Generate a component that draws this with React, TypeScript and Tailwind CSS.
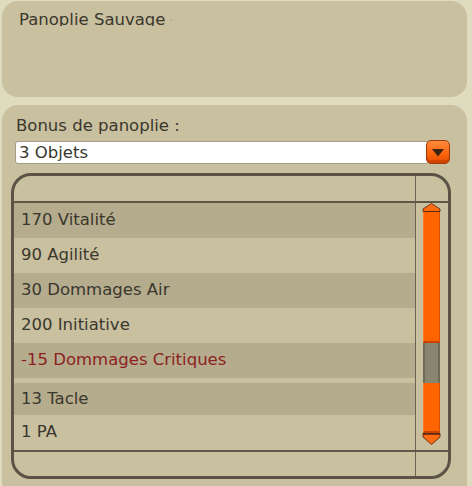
import React from "react";

type Row = { t: string; cls: string; red?: boolean };

const rows: Row[] = [
  { t: "170 Vitalité", cls: "h-[35px] bg-[#b5ac8d]" },
  { t: "90 Agilité", cls: "h-[35px]" },
  { t: "30 Dommages Air", cls: "h-[35px] bg-[#b5ac8d]" },
  { t: "200 Initiative", cls: "h-[35px]" },
  { t: "-15 Dommages Critiques", cls: "h-[35px] bg-[#b5ac8d]", red: true },
  { t: "", cls: "h-[5px]" },
  { t: "13 Tacle", cls: "h-[32px] bg-[#b5ac8d]" },
  { t: "1 PA", cls: "h-[35px]" },
];

function ScrollBar() {
  return (
    <div className="flex flex-col pl-[6px]">
      <svg width="19" height="9" viewBox="0 0 19 9" className="block">
        <polygon points="9.5,0.5 18,6 18,8.5 1,8.5 1,6" fill="#ff6a12" stroke="#6e3410" strokeWidth="1" />
        <line x1="1" y1="8.5" x2="18" y2="8.5" stroke="#5a2a0c" strokeWidth="1" />
      </svg>
      <div className="ml-[1px] w-[17px] h-[131px] bg-[#ff6400] border-r border-[#d85000] border-b-2 border-b-[#c44400] border-l border-l-[#ff7a24]" />
      <div className="ml-[1px] w-[17px] h-[40px] bg-[#8a8570] border-x-2 border-[#6e6a58]" />
      <div className="ml-[1px] w-[17px] h-[50px] bg-[#ff6400] border-r border-[#d85000] border-l border-l-[#ff7a24] border-b-2 border-b-[#c44400]" />
      <svg width="19" height="12" viewBox="0 0 19 12" className="block">
        <polygon points="1,0.5 18,0.5 18,4 9.5,11.5 1,4" fill="#ff6a12" stroke="#6e3410" strokeWidth="1" />
        <line x1="1" y1="1" x2="18" y2="1" stroke="#5a2a0c" strokeWidth="1.5" />
      </svg>
    </div>
  );
}

export default function App() {
  return (
    <div
      className="w-[472px] h-[486px] bg-[#dfdbbf] overflow-hidden flex flex-col pt-[1px] pl-[2px] pr-[5px] text-[16.5px] text-[#3a372d]"
      style={{ fontFamily: '"DejaVu Sans", Verdana, sans-serif' }}
    >
      <div className="h-[96px] shrink-0 rounded-[16px] bg-[#c9c09f] pl-[17px] pt-[9px]">
        <div className="flex items-start">
          <div className="h-[16px] overflow-hidden leading-[19px]">Panoplie Sauvage</div>
          <div className="ml-[6px] mt-[9px] w-[1px] h-[2px] bg-[#a39c85]" />
        </div>
      </div>

      <div className="mt-[8px] flex-1 rounded-t-[16px] bg-[#c9c09f] pt-[11px]">
        <div className="pl-[14px] leading-[19px]">Bonus de panoplie :</div>

        <div className="mt-[5px] ml-[13px] flex items-center">
          <div className="w-[414px] h-[23px] bg-white border border-[#a39d8a] rounded-[3px] pl-[3px] leading-[21px]">
            3 Objets
          </div>
          <div className="-ml-[3px] w-[24px] h-[24px] rounded-[5px] border border-[#9a3c10] bg-gradient-to-b from-[#ff8a3a] via-[#ff6a10] to-[#e84e00] shadow-[inset_0_-3px_0_#d24400] flex items-center justify-center">
            <svg width="12" height="8" viewBox="0 0 12 8" className="mt-[2px]">
              <polygon points="0,0 12,0 6,7.5" fill="#3a2412" />
            </svg>
          </div>
        </div>

        <div className="mt-[9px] ml-[9px] w-[440px] h-[306px] border-[3px] border-[#5b5446] rounded-[20px] overflow-hidden flex flex-col">
          <div className="flex h-[25px] shrink-0">
            <div className="flex-1" />
            <div className="w-[33px] border-l border-[#6b6452]" />
          </div>
          <div className="h-[2px] shrink-0 bg-[#5f5849]" />
          <div className="flex h-[247px] shrink-0">
            <div className="flex-1 flex flex-col">
              {rows.map((r, i) => (
                <div
                  key={i}
                  className={`${r.cls} flex items-center pl-[7px] ${r.red ? "text-[#8c2222]" : ""}`}
                >
                  {r.t}
                </div>
              ))}
            </div>
            <div className="w-[33px] border-l border-[#6b6452]">
              <ScrollBar />
            </div>
          </div>
          <div className="h-[2px] shrink-0 bg-[#5f5849]" />
          <div className="flex flex-1">
            <div className="flex-1" />
            <div className="w-[33px] border-l border-[#6b6452]" />
          </div>
        </div>
      </div>
    </div>
  );
}
